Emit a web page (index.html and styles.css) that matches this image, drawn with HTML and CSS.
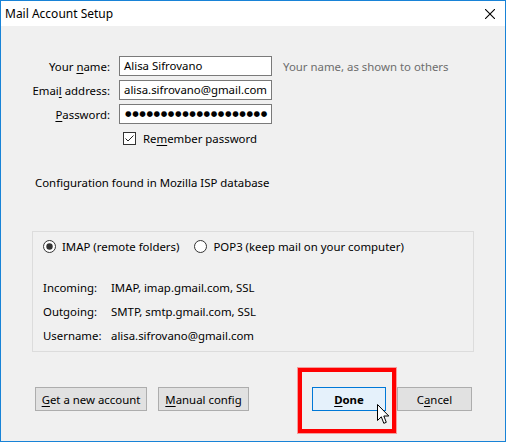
FILE: index.html
```html
<!DOCTYPE html>
<html>
<head>
<meta charset="utf-8">
<link rel="stylesheet" href="styles.css">
</head>
<body>
<div class="window">
  <div class="titlebar">
    <span class="title">Mail Account Setup</span>
    <svg class="close" width="10" height="10" viewBox="0 0 10 10"><path d="M0 0L10 10M10 0L0 10" stroke="#000" stroke-width="1.1" fill="none"/></svg>
  </div>
  <div class="content">
    <div class="form">
      <label class="lbl">Your <u>n</u>ame:</label>
      <div class="input">Alisa Sifrovano</div>
      <span class="hint">Your name, as shown to others</span>
      <label class="lbl">Emai<u>l</u> address:</label>
      <div class="input">alisa.sifrovano@gmail.com</div>
      <span></span>
      <label class="lbl"><u>P</u>assword:</label>
      <div class="input pw"><span class="dots">●●●●●●●●●●●●●●●●●●●●</span></div>
      <span></span>
      <div class="remember">
        <svg class="check" width="13" height="13" viewBox="0 0 13 13"><rect x="0.5" y="0.5" width="12" height="12" fill="#fff" stroke="#333"/><path d="M2.5 6.5L5 9L10.5 3.5" stroke="#222" stroke-width="1" fill="none"/></svg>
        <span>Re<u>m</u>ember password</span>
      </div>
    </div>
    <p class="status">Configuration found in Mozilla ISP database</p>
    <div class="group">
      <div class="radios">
        <div class="radio"><svg width="13" height="13" viewBox="0 0 13 13"><circle cx="6.5" cy="6.5" r="6" fill="#fff" stroke="#333"/><circle cx="6.5" cy="6.5" r="3.2" fill="#333"/></svg><span>IMAP (remote folders)</span></div>
        <div class="radio"><svg width="13" height="13" viewBox="0 0 13 13"><circle cx="6.5" cy="6.5" r="6" fill="#fff" stroke="#333"/></svg><span>POP3 (keep mail on your computer)</span></div>
      </div>
      <div class="info">
        <span class="ilbl">Incoming:</span><span>IMAP, imap.gmail.com, SSL</span>
        <span class="ilbl">Outgoing:</span><span>SMTP, smtp.gmail.com, SSL</span>
        <span class="ilbl">Username:</span><span>alisa.sifrovano@gmail.com</span>
      </div>
    </div>
    <div class="buttons">
      <div class="btn gna"><u>G</u>et a new account</div>
      <div class="btn manual"><u>M</u>anual config</div>
      <div class="spacer"></div>
      <div class="btn done"><u>D</u>one</div>
      <div class="btn cancel">C<u>a</u>ncel</div>
      <div class="highlight"></div>
      <svg class="cursor" width="14" height="22" viewBox="0 0 14 22"><path d="M0.5 0.5L0.5 16.5L4.3 12.8L6.8 19.3L9.3 18.3L6.8 12L11.8 12Z" fill="#fff" stroke="#000" stroke-width="1" stroke-linejoin="miter"/></svg>
    </div>
  </div>
</div>
</body>
</html>
```

FILE: styles.css
```css
html, body {
  margin: 0;
  padding: 0;
  background: #fff;
}
body {
  font-family: "Noto Sans", "Open Sans", sans-serif;
  font-size: 11.4px;
  color: #000;
}
u { text-decoration: underline; text-underline-offset: 2px; text-decoration-thickness: 1px; }
.window {
  width: 506px;
  height: 442px;
  box-sizing: border-box;
  border: 1px solid #1883d7;
  background: #f0f0f0;
  display: flex;
  flex-direction: column;
}
.titlebar {
  height: 25px;
  background: #fff;
  display: flex;
  align-items: center;
  justify-content: space-between;
  padding: 0 10px 0 4px;
}
.title {
  font-size: 12px;
}
.close { display: block; }
.content {
  flex: 1;
  display: flex;
  flex-direction: column;
  position: relative;
}
.form {
  margin-top: 30px;
  display: grid;
  grid-template-columns: 109px 153px auto;
  grid-auto-rows: 20px;
  column-gap: 9px;
  row-gap: 4px;
}
.lbl {
  text-align: right;
  align-self: center;
}
.input {
  box-sizing: border-box;
  height: 20px;
  border: 1px solid #7a7a7a;
  background: #fff;
  padding: 0 0 0 4px;
  line-height: 18px;
  white-space: nowrap;
  overflow: hidden;
}
.input.pw {
  display: flex;
  align-items: center;
  padding-left: 5px;
}
.dots {
  font-family: "DejaVu Sans", sans-serif;
  font-size: 7.5px;
  letter-spacing: 0.6px;
  line-height: 10px;
}
.hint {
  color: #6d6d6d;
  align-self: center;
  margin-left: 2px;
}
.remember {
  grid-column: 2 / span 2;
  display: flex;
  align-items: center;
  padding-left: 4px;
  gap: 7px;
}
.check { display: block; }
.status {
  margin: 27px 0 0 34px;
  line-height: 16px;
}
.group {
  margin: 40px 0 0 31px;
  width: 442px;
  height: 121px;
  box-sizing: border-box;
  border: 1px solid #dcdcdc;
  padding: 4px 10px 0 10px;
}
.radios {
  display: flex;
  height: 20px;
  align-items: center;
  gap: 15px;
}
.radio {
  display: flex;
  align-items: center;
  gap: 6px;
}
.radio svg { display: block; }
.info {
  margin-top: 19px;
  display: grid;
  grid-template-columns: 54px auto;
  grid-auto-rows: 24px;
  column-gap: 14px;
  align-items: center;
}
.ilbl { text-align: right; }
.buttons {
  margin-top: 35px;
  display: flex;
  padding: 0 33px 0 34px;
  gap: 11px;
  position: relative;
}
.spacer { flex: 1; }
.btn {
  box-sizing: border-box;
  height: 24px;
  border: 1px solid #adadad;
  background: #e1e1e1;
  display: flex;
  align-items: center;
  justify-content: center;
}
.gna { width: 112px; }
.manual { width: 91px; }
.done {
  width: 74px;
  background: #e5f1fb;
  border-color: #0078d7;
  font-weight: bold;
}
.cancel { width: 75px; }
.highlight {
  position: absolute;
  left: 297px;
  top: -19px;
  width: 98px;
  height: 65px;
  box-sizing: border-box;
  border: 4px solid #f00;
  box-shadow: 0 0 0 1px rgba(255,0,0,0.35);
}
.cursor {
  position: absolute;
  left: 376px;
  top: 17px;
}
```
